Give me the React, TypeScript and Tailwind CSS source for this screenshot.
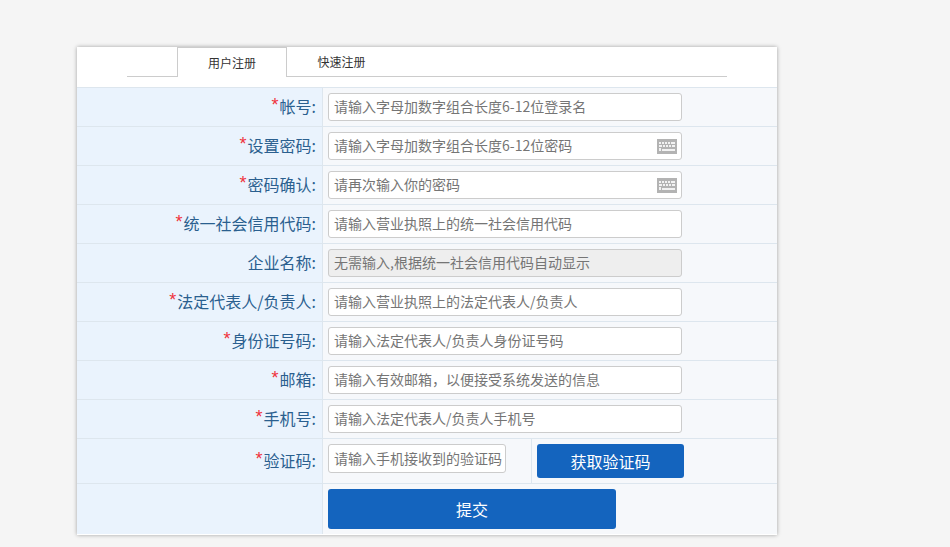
import React from "react";

const rows = [
  { label: "帐号:", req: true, ph: "请输入字母加数字组合长度6-12位登录名" },
  { label: "设置密码:", req: true, ph: "请输入字母加数字组合长度6-12位密码", kb: true },
  { label: "密码确认:", req: true, ph: "请再次输入你的密码", kb: true },
  { label: "统一社会信用代码:", req: true, ph: "请输入营业执照上的统一社会信用代码" },
  { label: "企业名称:", req: false, ph: "无需输入,根据统一社会信用代码自动显示", disabled: true },
  { label: "法定代表人/负责人:", req: true, ph: "请输入营业执照上的法定代表人/负责人" },
  { label: "身份证号码:", req: true, ph: "请输入法定代表人/负责人身份证号码" },
  { label: "邮箱:", req: true, ph: "请输入有效邮箱，以便接受系统发送的信息" },
  { label: "手机号:", req: true, ph: "请输入法定代表人/负责人手机号" },
];

function Keyboard() {
  return (
    <svg width="20" height="15" viewBox="0 0 20 15" className="absolute right-[5px] top-[7px]">
      <rect width="20" height="15" fill="#b3b3b3" />
      <g fill="#f2f2f2">
        <rect x="2" y="3" width="2" height="2" />
        <rect x="5" y="3" width="2" height="2" />
        <rect x="8" y="3" width="2" height="2" />
        <rect x="11" y="3" width="2" height="2" />
        <rect x="14" y="3" width="4" height="2" />
        <rect x="2" y="6" width="3" height="2" />
        <rect x="6" y="6" width="2" height="2" />
        <rect x="9" y="6" width="2" height="2" />
        <rect x="12" y="6" width="2" height="2" />
        <rect x="15" y="6" width="3" height="2" />
        <rect x="2" y="9" width="2" height="3" />
        <rect x="5" y="10" width="13" height="2" />
      </g>
    </svg>
  );
}

function Label({ text, req }: { text: string; req: boolean }) {
  return (
    <div className="w-[246px] shrink-0 bg-[#eaf3fd] border-r border-[#dde6ee] flex items-center justify-end pr-[6px] pb-[3px] text-[16px] text-[#2a5f8f]">
      {req && <span className="text-[#f0323c] text-[18px] mr-px font-['Liberation_Sans']">*</span>}
      <span>{text}</span>
    </div>
  );
}

export default function App() {
  return (
    <div
      className="min-h-screen bg-[#f5f5f5] pt-[47px] pl-[77px]"
      style={{ fontFamily: '"Noto Sans CJK SC", "Liberation Sans", sans-serif' }}
    >
      <div className="w-[700px] h-[488px] bg-white shadow-[0_0_4px_rgba(0,0,0,0.35)]">
        <div className="h-[40px] px-[50px] pb-[10px] flex">
          <div className="flex-1 flex border-b border-[#cccccc] text-[12px] text-[#333333]">
            <div className="ml-[50px] w-[110px] h-[30px] bg-white border-x border-t border-[#cccccc] flex items-center justify-center">
              用户注册
            </div>
            <div className="w-[109px] h-[29px] flex items-center justify-center">快速注册</div>
          </div>
        </div>
        <div className="border-t border-[#dde6ee]">
          {rows.map((r) => (
            <div key={r.label} className="h-[39px] flex border-b border-[#dde6ee]">
              <Label text={r.label} req={r.req} />
              <div className="flex-1 bg-[#f6f8fb] pl-[5px] pt-[5px]">
                <div className="relative w-[354px] h-[28px]">
                  <input
                    readOnly
                    placeholder={r.ph}
                    className={`w-full h-full border border-[#cccccc] rounded-[3px] pl-[5px] pb-[2px] text-[14px] outline-none placeholder:text-[#757575] ${r.disabled ? "bg-[#eeeeee]" : "bg-white"}`}
                  />
                  {r.kb && <Keyboard />}
                </div>
              </div>
            </div>
          ))}
          <div className="h-[45px] flex border-b border-[#dde6ee]">
            <Label text="验证码:" req />
            <div className="flex-1 bg-[#f6f8fb] flex">
              <div className="w-[209px] border-r border-[#dde6ee] pl-[5px] pt-[5px]">
                <input
                  readOnly
                  placeholder="请输入手机接收到的验证码"
                  className="w-[178px] h-[29px] border border-[#cccccc] rounded-[3px] pl-[5px] pb-[2px] text-[14px] bg-white outline-none placeholder:text-[#757575]"
                />
              </div>
              <div className="pl-[5px] pt-[5px]">
                <button className="w-[147px] h-[34px] bg-[#1464be] rounded-[3px] text-white text-[16px]">
                  获取验证码
                </button>
              </div>
            </div>
          </div>
          <div className="h-[50px] flex">
            <div className="w-[246px] shrink-0 bg-[#eaf3fd] border-r border-[#dde6ee]" />
            <div className="flex-1 bg-[#f6f8fb] pl-[5px] pt-[5px]">
              <button className="w-[288px] h-[40px] bg-[#1464be] rounded-[3px] text-white text-[16px]">
                提交
              </button>
            </div>
          </div>
        </div>
      </div>
    </div>
  );
}
